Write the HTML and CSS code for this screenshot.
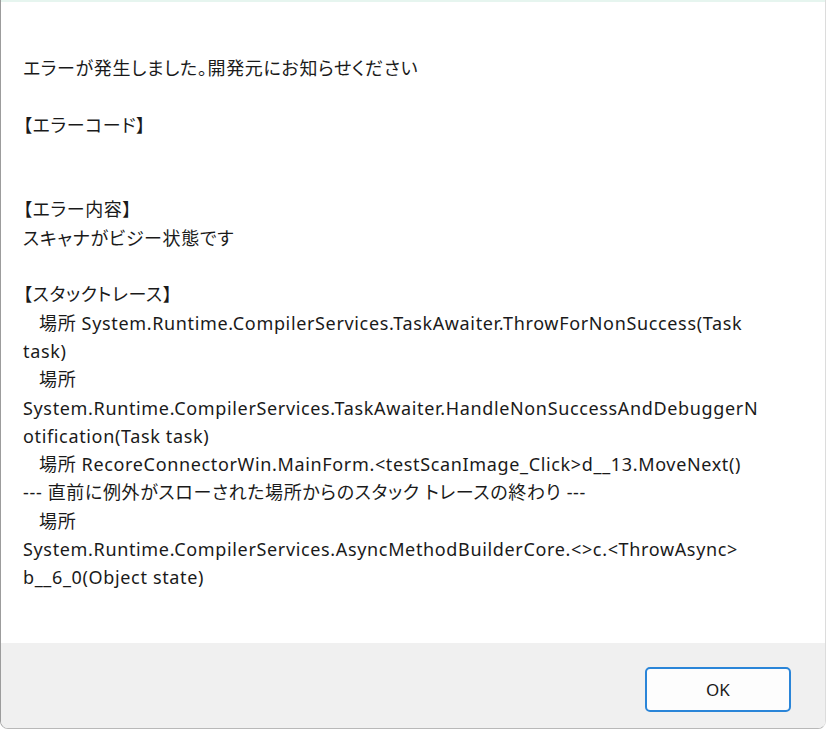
FILE: index.html
```html
<!DOCTYPE html>
<html lang="ja">
<head>
    <meta charset="UTF-8">
    <title>エラー</title>
    <link rel="stylesheet" href="styles.css">
</head>
<body>
    <div class="window">
        <div class="accent"></div>

        <div class="content">
            <p class="message">エラーが発生しました。開発元にお知らせください

【エラーコード】


【エラー内容】
スキャナがビジー状態です

【スタックトレース】
   場所 System.Runtime.CompilerServices.TaskAwaiter.ThrowForNonSuccess(Task
task)
   場所
System.Runtime.CompilerServices.TaskAwaiter.HandleNonSuccessAndDebuggerN
otification(Task task)
   場所 RecoreConnectorWin.MainForm.&lt;testScanImage_Click&gt;d__13.MoveNext()
--- 直前に例外がスローされた場所からのスタック トレースの終わり ---
   場所
System.Runtime.CompilerServices.AsyncMethodBuilderCore.&lt;&gt;c.&lt;ThrowAsync&gt;
b__6_0(Object state)</p>
        </div>

        <div class="footer">
            <button class="btn-ok">OK</button>
        </div>
    </div>
</body>
</html>
```

FILE: styles.css
```css
html, body {
    margin: 0;
    padding: 0;
    background: #ffffff;
}

body {
    font-family: 'Noto Sans', 'Noto Sans CJK JP', sans-serif;
    color: #1a1a1a;
}

.window {
    width: 826px;
    height: 729px;
    box-sizing: border-box;
    display: flex;
    flex-direction: column;
    border-left: 1px solid #9c9c9c;
    border-right: 1px solid #dcdcdc;
    border-bottom: 1px solid #b8b8b8;
    border-radius: 0 0 8px 8px;
    overflow: hidden;
}

/* title bar bottom edge */
.accent {
    height: 2px;
    background: #e6f5ef;
}

.content {
    height: 641px;
    background: #ffffff;
    padding: 52px 0 0 22px;
    box-sizing: border-box;
}

/* proportional kana so the japanese stays narrow next to the wider latin */
.message {
    margin: 0;
    white-space: pre;
    font-size: 18px;
    letter-spacing: 0.65px;
    line-height: 28.3px;
    font-feature-settings: "palt";
}

.footer {
    flex: 1;
    background: #f0f0f0;
    display: flex;
    justify-content: flex-end;
    align-items: flex-start;
    padding: 24px 34px 0 0;
}

.btn-ok {
    width: 146px;
    height: 45px;
    background: #fdfdfd;
    border: 2px solid #2a85d8;
    border-radius: 5px;
    font-family: 'Noto Sans', sans-serif;
    font-size: 17px;
    color: #1a1a1a;
    cursor: pointer;
}
```
